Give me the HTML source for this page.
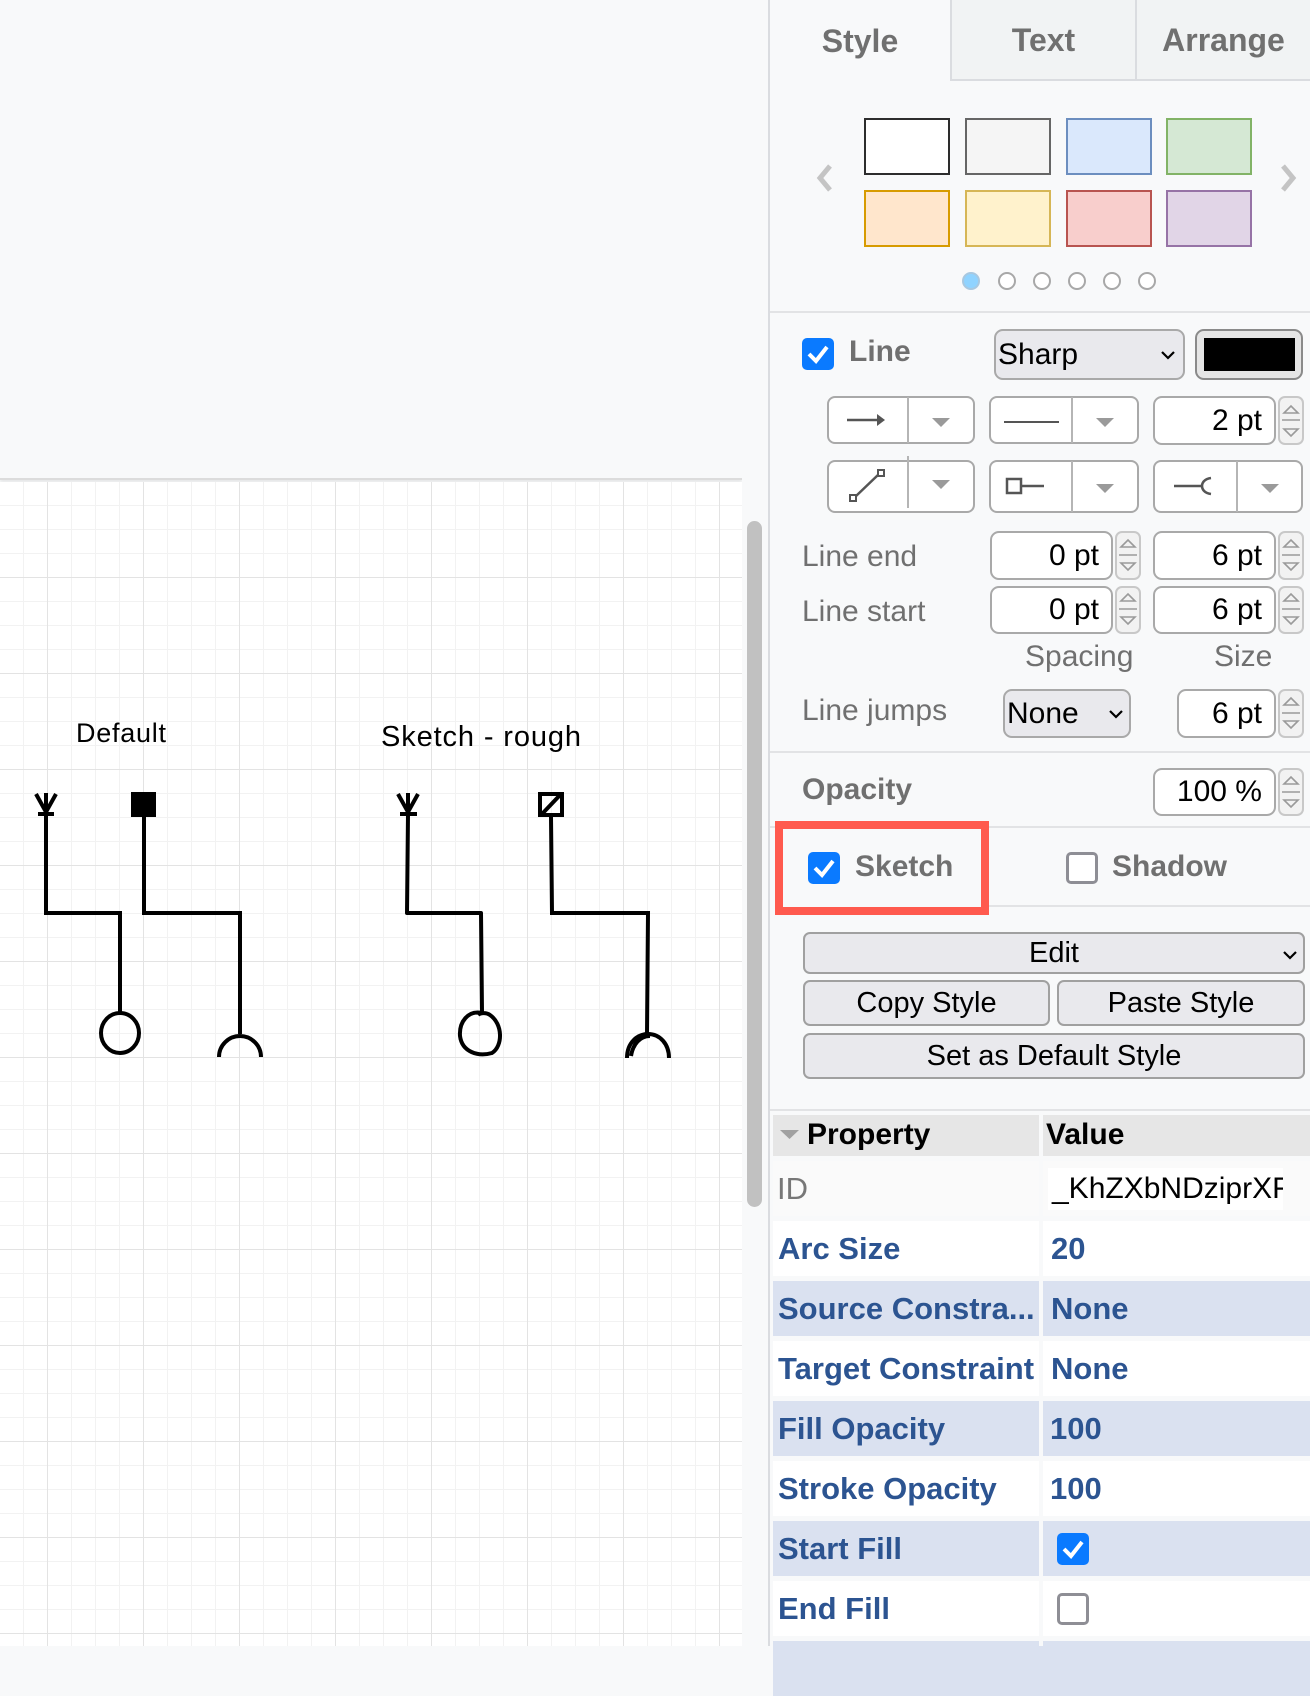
<!DOCTYPE html>
<html><head><meta charset="utf-8"><style>
*{box-sizing:border-box;margin:0;padding:0}
body{width:1310px;height:1646px;position:relative;overflow:hidden;background:#f8f9fa;font-family:"Liberation Sans",sans-serif}
.a{position:absolute}
#top{left:0;top:0;width:742px;height:480px;background:#f8f9fa;border-bottom:2px solid #dcdcdc;box-shadow:0 2px 3px rgba(0,0,0,.08)}
#grid{left:0;top:482px;width:742px;height:1164px;background-color:#fff;
background-image:linear-gradient(90deg,#e3e3e3 1px,transparent 1px),linear-gradient(#e3e3e3 1px,transparent 1px),linear-gradient(90deg,#f2f2f2 1px,transparent 1px),linear-gradient(#f2f2f2 1px,transparent 1px);
background-size:96px 96px,96px 96px,24px 24px,24px 24px;background-position:47px -1px,47px -1px,23px -1px,23px -1px}
#sb{left:747px;top:521px;width:15px;height:686px;background:#c1c1c1;border-radius:8px}
#panel{left:768px;top:0;width:542px;height:1646px;background:#f8f9fa;border-left:2px solid #dadce0}
.tab{top:0;height:81px;font-weight:bold;font-size:32px;color:#707070;text-align:center;line-height:82px}
.sw{width:86px;height:57px;border:2px solid}
.dot{width:18px;height:18px;border-radius:50%;border:2px solid #a8a8a8;background:#fff}
.sep{left:770px;width:540px;height:2px;background:#e2e3e5}
.lbl{font-size:30px;color:#707070}
.blbl{font-size:30px;color:#707070;font-weight:bold}
.cb{width:32px;height:32px;border-radius:5px;background:#0a7aff}
.cb svg{position:absolute;left:4px;top:4px}
.cbo{width:32px;height:32px;border-radius:5px;border:3px solid #8e8e95;background:#fff}
.btn{border:2px solid #a9a9a9;border-radius:8px;background:#fff}
.sel{border:2px solid #a9a9a9;border-radius:9px;background:#e9e9ed;font-size:30px;color:#000}
.inp{border:2px solid #a9a9a9;border-radius:9px;background:#fff;font-size:30px;color:#000;text-align:right;padding-right:12px}
.spin{width:26px;border:2px solid #c8c8c8;border-radius:7px;background:#f2f2f2}
.pbtn{border:2px solid #a0a0a0;border-radius:7px;background:#e9e9ed;font-size:29px;color:#000;text-align:center}
.prow{left:773px;width:537px;height:55px}
.pc{position:absolute;top:0;height:55px;font-size:31px;font-weight:bold;color:#2c5491;line-height:55px;padding-left:1px;white-space:nowrap}
</style></head><body>
<div class="a" id="top"></div>
<div class="a" id="grid"></div>
<div class="a" style="left:742px;top:0;width:26px;height:1646px;background:#f8f9fa"></div>
<div class="a" id="sb"></div>

<svg class="a" style="left:0;top:680px" width="742" height="420" viewBox="0 680 742 420">
<text x="76" y="742" font-family="Liberation Sans, sans-serif" font-size="27" fill="#000" textLength="90">Default</text>
<text x="381" y="746" font-family="Liberation Sans, sans-serif" font-size="29" fill="#000" textLength="200">Sketch - rough</text>
<g stroke="#000" stroke-width="4" fill="none">
<path d="M46 814V913H120V1013"/>
<path d="M36 794L46 812L56 794M46 793V812M38 814H54"/>
<ellipse cx="120" cy="1033" rx="19" ry="20"/>
<path d="M144 817V913H240V1034"/>
<path d="M219 1057A21 21 0 0 1 261 1057"/>
<path d="M408 814L407 913H481L482 1012" stroke-linejoin="round"/>
<path d="M398 794L408 812L418 794M408 793V812M400 814H417"/>
<path d="M482 1013C468 1010 459 1022 460 1036C462 1052 478 1057 492 1053C503 1046 503 1024 490 1015C486 1012 480 1013 478 1015"/>
<path d="M551 817L552 913H648L647 1034"/>
<rect x="540" y="794" width="22" height="21"/>
<path d="M542 814L561 794"/>
<path d="M627 1058C627 1042 638 1034 648 1034C660 1034 669 1044 669 1058M631 1056C633 1044 640 1036 650 1036"/>
</g>
<rect x="131" y="792" width="25" height="25" fill="#000"/>
</svg>

<div class="a" id="panel"></div>
<div class="a tab" style="left:770px;width:180px;background:#f8f9fa">Style</div>
<div class="a tab" style="left:950px;width:185px;background:#f1f3f4;border-left:2px solid #dadce0;border-bottom:2px solid #dadce0;line-height:80px">Text</div>
<div class="a tab" style="left:1135px;width:175px;background:#f1f3f4;border-left:2px solid #dadce0;border-bottom:2px solid #dadce0;line-height:80px">Arrange</div>

<div class="a sw" style="left:864px;top:118px;background:#fff;border-color:#2d2d2d"></div>
<div class="a sw" style="left:965px;top:118px;background:#f5f5f5;border-color:#666"></div>
<div class="a sw" style="left:1066px;top:118px;background:#dae8fc;border-color:#6c8ebf"></div>
<div class="a sw" style="left:1166px;top:118px;background:#d5e8d4;border-color:#82b366"></div>
<div class="a sw" style="left:864px;top:190px;background:#ffe6cc;border-color:#d79b00"></div>
<div class="a sw" style="left:965px;top:190px;background:#fff2cc;border-color:#d6b656"></div>
<div class="a sw" style="left:1066px;top:190px;background:#f8cecc;border-color:#b85450"></div>
<div class="a sw" style="left:1166px;top:190px;background:#e1d5e7;border-color:#9673a6"></div>
<svg class="a" style="left:815px;top:162px" width="20" height="32"><path d="M15 4L5 16L15 28" stroke="#c4c4c4" stroke-width="5" fill="none"/></svg>
<svg class="a" style="left:1278px;top:162px" width="20" height="32"><path d="M5 4L15 16L5 28" stroke="#c4c4c4" stroke-width="5" fill="none"/></svg>
<div class="a dot" style="left:962px;top:272px;background:#8fd3ff;border-color:#a8c8e0"></div>
<div class="a dot" style="left:998px;top:272px"></div>
<div class="a dot" style="left:1033px;top:272px"></div>
<div class="a dot" style="left:1068px;top:272px"></div>
<div class="a dot" style="left:1103px;top:272px"></div>
<div class="a dot" style="left:1138px;top:272px"></div>
<div class="a sep" style="top:311px"></div>

<div class="a cb" style="left:802px;top:338px"><svg width="24" height="24"><path d="M3 12L10 19L21 5" stroke="#fff" stroke-width="4" fill="none"/></svg></div>
<div class="a blbl" style="left:849px;top:335px">Line</div>
<div class="a sel" style="left:994px;top:329px;width:191px;height:51px;line-height:47px;padding-left:2px">Sharp<svg class="a" style="left:164px;top:18px" width="16" height="12"><path d="M2 3L8 9L14 3" stroke="#000" stroke-width="2.2" fill="none"/></svg></div>
<div class="a" style="left:1195px;top:329px;width:108px;height:51px;border:2px solid #8a8a8a;border-radius:9px;background:#e5e5e5"><div class="a" style="left:7px;top:7px;width:91px;height:33px;background:#000"></div></div>

<div class="a btn" style="left:827px;top:396px;width:148px;height:48px"></div>
<div class="a" style="left:907px;top:397px;width:2px;height:46px;background:#b5b5b5"></div>
<svg class="a" style="left:845px;top:410px" width="45" height="20"><path d="M2 10H38" stroke="#555" stroke-width="2.5"/><path d="M32 4L40 10L32 16" fill="#555"/></svg>
<div class="a btn" style="left:989px;top:396px;width:150px;height:48px"></div>
<div class="a" style="left:1071px;top:397px;width:2px;height:46px;background:#b5b5b5"></div>
<div class="a" style="left:1004px;top:421px;width:55px;height:2px;background:#555"></div>
<div class="a inp" style="left:1153px;top:396px;width:123px;height:49px;line-height:45px">2 pt</div>
<div class="a spin" style="left:1278px;top:396px;height:49px"></div>

<div class="a btn" style="left:827px;top:460px;width:148px;height:53px"></div>
<div class="a" style="left:907px;top:456px;width:2px;height:52px;background:#b5b5b5"></div>
<svg class="a" style="left:845px;top:465px" width="50" height="42"><path d="M10 32L34 9" stroke="#555" stroke-width="2.5"/><rect x="5" y="30" width="6" height="6" fill="#fff" stroke="#555" stroke-width="2"/><rect x="33" y="5" width="6" height="6" fill="#fff" stroke="#555" stroke-width="2"/></svg>
<div class="a btn" style="left:989px;top:460px;width:150px;height:53px"></div>
<div class="a" style="left:1071px;top:461px;width:2px;height:51px;background:#b5b5b5"></div>
<svg class="a" style="left:1005px;top:472px" width="50" height="30"><rect x="2" y="7" width="14" height="14" fill="#fff" stroke="#555" stroke-width="2.5"/><path d="M16 14H39" stroke="#555" stroke-width="2.5"/></svg>
<div class="a btn" style="left:1153px;top:460px;width:150px;height:53px"></div>
<div class="a" style="left:1236px;top:461px;width:2px;height:51px;background:#b5b5b5"></div>
<svg class="a" style="left:1170px;top:472px" width="50" height="30"><path d="M4 14H32" stroke="#555" stroke-width="2.5"/><path d="M41 6C34 7 32 11 32 14C32 17 34 21 41 22" stroke="#555" stroke-width="2.5" fill="none"/></svg>
<svg class="a" style="left:930px;top:416px" width="22" height="14"><path d="M2 2H20L11 11Z" fill="#9a9a9a"/></svg>
<svg class="a" style="left:1094px;top:416px" width="22" height="14"><path d="M2 2H20L11 11Z" fill="#9a9a9a"/></svg>
<svg class="a" style="left:930px;top:478px" width="22" height="14"><path d="M2 2H20L11 11Z" fill="#9a9a9a"/></svg>
<svg class="a" style="left:1094px;top:482px" width="22" height="14"><path d="M2 2H20L11 11Z" fill="#9a9a9a"/></svg>
<svg class="a" style="left:1259px;top:482px" width="22" height="14"><path d="M2 2H20L11 11Z" fill="#9a9a9a"/></svg>

<div class="a lbl" style="left:802px;top:540px">Line end</div>
<div class="a lbl" style="left:802px;top:595px">Line start</div>
<div class="a inp" style="left:990px;top:531px;width:123px;height:49px;line-height:45px">0 pt</div>
<div class="a spin" style="left:1115px;top:531px;height:49px"></div>
<div class="a inp" style="left:1153px;top:531px;width:123px;height:49px;line-height:45px">6 pt</div>
<div class="a spin" style="left:1278px;top:531px;height:49px"></div>
<div class="a inp" style="left:990px;top:586px;width:123px;height:48px;line-height:44px">0 pt</div>
<div class="a spin" style="left:1115px;top:586px;height:48px"></div>
<div class="a inp" style="left:1153px;top:586px;width:123px;height:48px;line-height:44px">6 pt</div>
<div class="a spin" style="left:1278px;top:586px;height:48px"></div>
<div class="a lbl" style="left:1025px;top:640px">Spacing</div>
<div class="a lbl" style="left:1214px;top:640px">Size</div>
<div class="a lbl" style="left:802px;top:694px">Line jumps</div>
<div class="a sel" style="left:1003px;top:689px;width:128px;height:49px;line-height:45px;padding-left:2px">None<svg class="a" style="left:103px;top:17px" width="16" height="12"><path d="M2 3L8 9L14 3" stroke="#000" stroke-width="2.2" fill="none"/></svg></div>
<div class="a inp" style="left:1177px;top:689px;width:99px;height:49px;line-height:45px">6 pt</div>
<div class="a spin" style="left:1278px;top:689px;height:49px"></div>
<div class="a sep" style="top:751px"></div>

<div class="a blbl" style="left:802px;top:773px">Opacity</div>
<div class="a inp" style="left:1153px;top:768px;width:123px;height:48px;line-height:44px">100 %</div>
<div class="a spin" style="left:1278px;top:768px;height:48px"></div>
<div class="a sep" style="top:826px"></div>

<div class="a" style="left:775px;top:821px;width:214px;height:94px;border:8px solid #ff5a4e"></div>
<div class="a cb" style="left:808px;top:852px"><svg width="24" height="24"><path d="M3 12L10 19L21 5" stroke="#fff" stroke-width="4" fill="none"/></svg></div>
<div class="a blbl" style="left:855px;top:850px">Sketch</div>
<div class="a cbo" style="left:1066px;top:852px"></div>
<div class="a blbl" style="left:1112px;top:850px">Shadow</div>
<div class="a sep" style="top:905px;left:989px;width:321px"></div>

<div class="a pbtn" style="left:803px;top:932px;width:502px;height:42px;line-height:39px">Edit<svg class="a" style="left:477px;top:15px" width="16" height="12"><path d="M2 3L8 9L14 3" stroke="#000" stroke-width="2.2" fill="none"/></svg></div>
<div class="a pbtn" style="left:803px;top:980px;width:247px;height:46px;line-height:43px">Copy Style</div>
<div class="a pbtn" style="left:1057px;top:980px;width:248px;height:46px;line-height:43px">Paste Style</div>
<div class="a pbtn" style="left:803px;top:1033px;width:502px;height:46px;line-height:43px">Set as Default Style</div>
<div class="a sep" style="top:1109px"></div>

<div class="a" style="left:773px;top:1115px;width:266px;height:41px;background:#e6e6e6"></div>
<div class="a" style="left:1043px;top:1115px;width:267px;height:41px;background:#e6e6e6"></div>
<svg class="a" style="left:779px;top:1128px" width="22" height="14"><path d="M1 2H20L10.5 11Z" fill="#a0a0a0"/></svg>
<div class="a" style="left:807px;top:1118px;font-size:30px;font-weight:bold;color:#000">Property</div>
<div class="a" style="left:1046px;top:1118px;font-size:30px;font-weight:bold;color:#000">Value</div>

<div class="a prow" style="top:1161px;background:#fafafa"><div class="pc" style="left:3px;color:#777;font-weight:normal">ID</div><div class="a" style="left:275px;top:7px;width:235px;height:42px;background:#fff"></div><div class="pc" style="left:278px;color:#000;font-weight:normal;font-size:30px;width:232px;overflow:hidden">_KhZXbNDziprXFw</div></div>
<div class="a prow" style="top:1221px;background:#fff"><div class="pc" style="left:4px">Arc Size</div><div class="pc" style="left:277px">20</div></div>
<div class="a prow" style="top:1281px;background:#dae1f0"><div class="pc" style="left:4px">Source Constra...</div><div class="pc" style="left:277px">None</div></div>
<div class="a prow" style="top:1341px;background:#fff"><div class="pc" style="left:4px">Target Constraint</div><div class="pc" style="left:277px">None</div></div>
<div class="a prow" style="top:1401px;background:#dae1f0"><div class="pc" style="left:4px">Fill Opacity</div><div class="pc" style="left:276px">100</div></div>
<div class="a prow" style="top:1461px;background:#fff"><div class="pc" style="left:4px">Stroke Opacity</div><div class="pc" style="left:276px">100</div></div>
<div class="a prow" style="top:1521px;background:#dae1f0"><div class="pc" style="left:4px">Start Fill</div></div>
<div class="a prow" style="top:1581px;background:#fff"><div class="pc" style="left:4px">End Fill</div></div>
<div class="a prow" style="top:1641px;background:#dae1f0"></div>
<div class="a" style="left:1039px;top:1156px;width:4px;height:490px;background:#f8f9fa"></div>
<div class="a cb" style="left:1057px;top:1533px"><svg width="24" height="24"><path d="M3 12L10 19L21 5" stroke="#fff" stroke-width="4" fill="none"/></svg></div>
<div class="a cbo" style="left:1057px;top:1593px"></div>

<svg class="a" style="left:0;top:0" width="1310" height="1646" pointer-events="none">
<g fill="none" stroke="#9a9a9a" stroke-width="1.6">
<path d="M1284 413L1291 406L1298 413ZM1284 429L1291 436L1298 429Z M1282 420H1300"/>
<path d="M1121 547L1128 540L1135 547ZM1121 563L1128 570L1135 563Z M1119 555H1137"/>
<path d="M1284 547L1291 540L1298 547ZM1284 563L1291 570L1298 563Z M1282 555H1300"/>
<path d="M1121 601L1128 594L1135 601ZM1121 617L1128 624L1135 617Z M1119 609H1137"/>
<path d="M1284 601L1291 594L1298 601ZM1284 617L1291 624L1298 617Z M1282 609H1300"/>
<path d="M1284 705L1291 698L1298 705ZM1284 721L1291 728L1298 721Z M1282 713H1300"/>
<path d="M1284 784L1291 777L1298 784ZM1284 800L1291 807L1298 800Z M1282 792H1300"/>
</g></svg>
</body></html>
